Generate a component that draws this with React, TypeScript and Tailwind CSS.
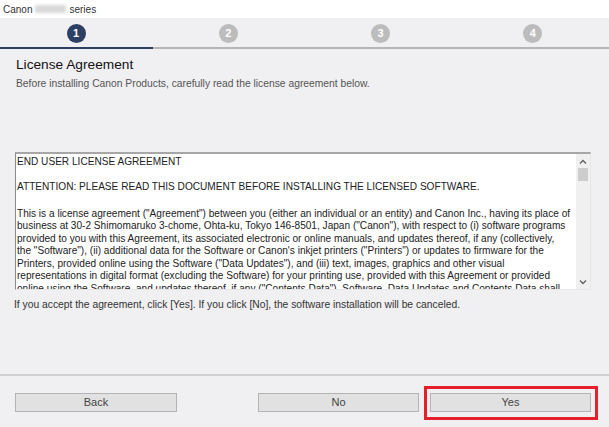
import React from "react";

const font = { fontFamily: '"Liberation Sans", Arial, sans-serif' };

function Step({ n, active }: { n: number; active?: boolean }) {
  return (
    <div className="flex justify-center items-center">
      <div
        className={
          "w-[19px] h-[19px] rounded-full flex items-center justify-center text-white text-[11px] font-bold " +
          (active ? "bg-[#2d3f63]" : "bg-[#bcbcbc]")
        }
      >
        {n}
      </div>
    </div>
  );
}

function Btn({ label }: { label: string }) {
  return (
    <div className="h-[19px] bg-[#e1e1e1] border border-[#b4b4b4] flex items-center justify-center text-[11px] text-[#444]">
      {label}
    </div>
  );
}

export default function App() {
  return (
    <div className="w-[609px] h-[427px] bg-[#f0eff2] flex flex-col overflow-hidden text-[#222]" style={font}>
      {/* title bar */}
      <div className="h-[18px] bg-white flex items-center pl-[3px] text-[10px] text-[#333] shrink-0">
        <span>Canon</span>
        <span className="w-[31px] h-[8px] bg-[#d9d9d9] blur-[1.5px] mx-[3px]" />
        <span>series</span>
      </div>
      {/* steps */}
      <div className="h-[29px] grid grid-cols-4 pt-[1px] shrink-0">
        <Step n={1} active />
        <Step n={2} />
        <Step n={3} />
        <Step n={4} />
      </div>
      <div className="h-[2px] bg-[#b5b5b5] flex shrink-0">
        <div className="w-[153px] h-[2px] bg-[#2d3f63]" />
      </div>
      {/* header */}
      <div className="pl-[16px] pt-[8px] shrink-0">
        <div className="text-[13.7px] leading-[16px] text-[#111]">License Agreement</div>
        <div className="text-[10.3px] leading-[12px] mt-[5px] text-[#555]">
          Before installing Canon Products, carefully read the license agreement below.
        </div>
      </div>
      {/* text box */}
      <div className="ml-[15px] mt-[62px] w-[576px] h-[138px] shrink-0 bg-white border-t-2 border-t-[#a7a7a7] border-l border-l-[#8a8a8a] border-r border-r-[#e6e6e6] border-b border-b-[#e6e6e6] flex">
        <div className="flex-1 overflow-hidden pl-[1px] pt-[2px] text-[10.1px] leading-[12.5px] text-[#222] whitespace-nowrap">
          <p>END USER LICENSE AGREEMENT</p>
          <p className="mt-[12px]">ATTENTION: PLEASE READ THIS DOCUMENT BEFORE INSTALLING THE LICENSED SOFTWARE.</p>
          <p className="mt-[14.5px]">
            This is a license agreement ("Agreement") between you (either an individual or an entity) and Canon Inc., having its place of
            <br />
            business at 30-2 Shimomaruko 3-chome, Ohta-ku, Tokyo 146-8501, Japan ("Canon"), with respect to (i) software programs
            <br />
            provided to you with this Agreement, its associated electronic or online manuals, and updates thereof, if any (collectively,
            <br />
            the "Software"), (ii) additional data for the Software or Canon's inkjet printers ("Printers") or updates to firmware for the
            <br />
            Printers, provided online using the Software ("Data Updates"), and (iii) text, images, graphics and other visual
            <br />
            representations in digital format (excluding the Software) for your printing use, provided with this Agreement or provided
            <br />
            online using the Software, and updates thereof, if any ("Contents Data"). Software, Data Updates and Contents Data shall
          </p>
        </div>
        <div className="w-[14px] flex flex-col items-center bg-[#f0f0f0]">
          <svg width="8" height="6" viewBox="0 0 8 6" className="mt-[5px]">
            <path d="M1 4.5 L4 1.5 L7 4.5" stroke="#606060" strokeWidth="1.3" fill="none" />
          </svg>
          <div className="w-[10px] h-[13px] bg-[#cdcdcd] mt-[3px]" />
          <div className="flex-1" />
          <svg width="8" height="6" viewBox="0 0 8 6" className="mb-[4px]">
            <path d="M1 1.5 L4 4.5 L7 1.5" stroke="#606060" strokeWidth="1.3" fill="none" />
          </svg>
        </div>
      </div>
      <div className="pl-[14px] mt-[9px] text-[10.3px] leading-[12px] text-[#333] shrink-0">
        If you accept the agreement, click [Yes]. If you click [No], the software installation will be canceled.
      </div>
      {/* footer */}
      <div className="mt-[63px] h-[2px] bg-[#cfcfcf] shrink-0" />
      <div className="flex items-center pl-[15px] pr-[18px] pt-[17px] shrink-0">
        <div className="w-[162px]">
          <Btn label="Back" />
        </div>
        <div className="flex-1" />
        <div className="w-[161px]">
          <Btn label="No" />
        </div>
        <div className="ml-[11px] w-[161px] relative">
          <Btn label="Yes" />
          <div className="absolute -left-[6px] -right-[7px] -top-[7px] -bottom-[8px] border-[3px] border-[#e5202a]" />
        </div>
      </div>
    </div>
  );
}
